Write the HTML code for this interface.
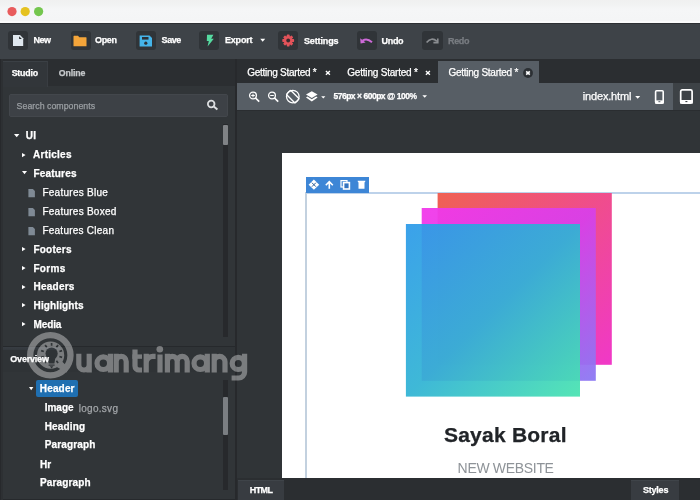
<!DOCTYPE html>
<html><head><meta charset="utf-8"><style>
html,body{margin:0;padding:0;}
body{width:700px;height:500px;position:relative;overflow:hidden;font-family:"Liberation Sans", sans-serif;background:#2f3336;}
.t{position:absolute;white-space:nowrap;-webkit-text-stroke:0.25px currentColor;filter:opacity(1);}
</style></head><body>
<div style="position:absolute;left:0px;top:0px;width:700px;height:23px;background:linear-gradient(#f0f0f0 0px,#f1f2f2 4px,#f5f6f7 9px,#f4f5f6 20px);"></div>
<div style="position:absolute;left:0px;top:20.6px;width:700px;height:2px;background:#fafbfb;"></div>
<svg style="position:absolute;left:0px;top:0px;" width="60" height="23" viewBox="0 0 60 23"><circle cx="12" cy="11.6" r="4.6" fill="#e85c5d"/><circle cx="25.2" cy="11.6" r="4.6" fill="#e5c220"/><circle cx="38.6" cy="11.6" r="4.6" fill="#74c64e"/></svg>
<div style="position:absolute;left:0px;top:23px;width:700px;height:36px;background:#3e4348;"></div>
<div style="position:absolute;left:0px;top:22.6px;width:700px;height:1.4px;background:#2d3034;"></div>
<div style="position:absolute;left:8.1px;top:31.4px;width:20.2px;height:18.6px;background:#303438;border-radius:3px;"></div>
<div style="position:absolute;left:70.5px;top:31.4px;width:20.2px;height:18.6px;background:#303438;border-radius:3px;"></div>
<div style="position:absolute;left:136.3px;top:31.4px;width:20.2px;height:18.6px;background:#303438;border-radius:3px;"></div>
<div style="position:absolute;left:199.2px;top:31.4px;width:20.2px;height:18.6px;background:#303438;border-radius:3px;"></div>
<div style="position:absolute;left:278px;top:31.4px;width:20.2px;height:18.6px;background:#303438;border-radius:3px;"></div>
<div style="position:absolute;left:356.9px;top:31.4px;width:20.2px;height:18.6px;background:#303438;border-radius:3px;"></div>
<div style="position:absolute;left:422.4px;top:31.4px;width:20.2px;height:18.6px;background:#303438;border-radius:3px;"></div>
<div class="t" style="left:33.4px;top:36.0px;font-size:9px;line-height:9px;font-weight:700;color:#fff;letter-spacing:-0.500px;">New</div>
<div class="t" style="left:95.0px;top:36.0px;font-size:9px;line-height:9px;font-weight:700;color:#fff;letter-spacing:-0.333px;">Open</div>
<div class="t" style="left:161.6px;top:36.0px;font-size:9px;line-height:9px;font-weight:700;color:#fff;letter-spacing:-0.433px;">Save</div>
<div class="t" style="left:225.0px;top:36.3px;font-size:9px;line-height:9px;font-weight:700;color:#fff;letter-spacing:-0.200px;">Export</div>
<div class="t" style="left:304.0px;top:37.0px;font-size:9px;line-height:9px;font-weight:700;color:#fff;letter-spacing:-0.143px;">Settings</div>
<div class="t" style="left:381.6px;top:37.0px;font-size:9px;line-height:9px;font-weight:700;color:#fff;letter-spacing:-0.333px;">Undo</div>
<div class="t" style="left:448.0px;top:37.0px;font-size:9px;line-height:9px;font-weight:700;color:#797d82;letter-spacing:-0.333px;">Redo</div>
<svg style="position:absolute;left:259px;top:38px;" width="8" height="5" viewBox="0 0 8 5"><path d="M1.2 0.8 H6.2 L3.7 3.8 Z" fill="#fff"/></svg>
<svg style="position:absolute;left:12px;top:34px;" width="12" height="13" viewBox="0 0 12 13"><path d="M1 1.1 H8 L11.2 4.3 V12.1 H1 Z" fill="#dfe7ee"/><path d="M7.1 2.2 L9.8 4.9 H7.1 Z" fill="#25282b"/></svg>
<svg style="position:absolute;left:73px;top:35px;" width="14" height="12" viewBox="0 0 14 12"><path d="M0.5 1.2 Q0.5 0.8 1 0.8 H5 L6.3 2.2 H13 Q13.5 2.2 13.5 2.7 V11.3 H0.5 Z" fill="#f4a53a"/></svg>
<svg style="position:absolute;left:139px;top:35px;" width="14" height="12" viewBox="0 0 14 12"><path d="M0.6 0.4 H10.5 L13 2.9 V11.5 H0.6 Z" fill="#45b4e9"/><rect x="3" y="2" width="6.5" height="2.6" fill="#2c3136"/><circle cx="6.8" cy="8.2" r="1.6" fill="#2c3136"/></svg>
<svg style="position:absolute;left:205px;top:34px;" width="10" height="13" viewBox="0 0 10 13"><path d="M2 0.8 H8.4 L6.2 4.8 H8.8 L2.6 12.4 L3.8 7 H1.8 Z" fill="#55daa0"/></svg>
<svg style="position:absolute;left:281px;top:34px;" width="14" height="14" viewBox="0 0 14 14"><g transform="translate(7.2 6.5)"><g fill="#e3535a"><rect x="-1.4" y="-5.9" width="2.8" height="3" rx="0.6" transform="rotate(0)"/><rect x="-1.4" y="-5.9" width="2.8" height="3" rx="0.6" transform="rotate(45)"/><rect x="-1.4" y="-5.9" width="2.8" height="3" rx="0.6" transform="rotate(90)"/><rect x="-1.4" y="-5.9" width="2.8" height="3" rx="0.6" transform="rotate(135)"/><rect x="-1.4" y="-5.9" width="2.8" height="3" rx="0.6" transform="rotate(180)"/><rect x="-1.4" y="-5.9" width="2.8" height="3" rx="0.6" transform="rotate(225)"/><rect x="-1.4" y="-5.9" width="2.8" height="3" rx="0.6" transform="rotate(270)"/><rect x="-1.4" y="-5.9" width="2.8" height="3" rx="0.6" transform="rotate(315)"/><circle r="4.4"/></g><circle r="1.9" fill="#3a2a2e"/></g></svg>
<svg style="position:absolute;left:359.4px;top:36.4px;" width="16" height="10" viewBox="0 0 16 10"><path d="M3.6 4.6 Q8 1.6 13 6.2" stroke="#cd6ad8" stroke-width="1.9" fill="none"/><path d="M1.2 2.2 L1.6 7.6 L6.6 6.4 Z" fill="#cd6ad8"/></svg>
<svg style="position:absolute;left:425px;top:37px;" width="15" height="8" viewBox="0 0 15 8"><path d="M1.6 5.6 Q6.4 -0.6 12 4.4" stroke="#8a8d91" stroke-width="1.6" fill="none"/><path d="M12.8 1.6 V5.6 H8.4" stroke="#8a8d91" stroke-width="1.6" fill="none"/></svg>
<div style="position:absolute;left:0px;top:59px;width:235px;height:441px;background:#313538;"></div>
<div style="position:absolute;left:0px;top:59px;width:235px;height:26.6px;background:#2b2e31;"></div>
<div style="position:absolute;left:1.2px;top:60.6px;width:46.8px;height:26px;background:#32363a;border-top:1px solid #3b4045;border-right:1px solid #393d42;border-left:1px solid #363a3e;box-sizing:border-box;"></div>
<div class="t" style="left:11.7px;top:69.1px;font-size:8.8px;line-height:8.8px;font-weight:700;color:#fff;letter-spacing:-0.200px;">Studio</div>
<div class="t" style="left:58.8px;top:69.1px;font-size:8.8px;line-height:8.8px;font-weight:700;color:#c6c9cc;letter-spacing:-0.160px;">Online</div>
<div style="position:absolute;left:8.6px;top:93.8px;width:219.4px;height:22.8px;background:#3d4146;border-radius:2px;border:1px solid #43474c;box-sizing:border-box;"></div>
<div class="t" style="left:16.6px;top:102.1px;font-size:8.8px;line-height:8.8px;font-weight:400;color:#9a9ea2;letter-spacing:0.013px;">Search components</div>
<svg style="position:absolute;left:205px;top:98px;" width="15" height="14" viewBox="0 0 15 14"><circle cx="6.2" cy="6" r="3.3" stroke="#dcdee0" stroke-width="1.8" fill="none"/><path d="M8.8 8.6 L12.4 11.6" stroke="#dcdee0" stroke-width="2"/></svg>
<div class="t" style="left:25.7px;top:130.9px;font-size:10px;line-height:10px;font-weight:700;color:#fff;letter-spacing:0.300px;">UI</div>
<svg style="position:absolute;left:13.3px;top:132.8px;" width="7.399999999999999" height="5.199999999999989" viewBox="0 0 7.399999999999999 5.199999999999989"><path d="M1 1 H6.399999999999999 L3.6999999999999993 4.199999999999989 Z" fill="#fff"/></svg>
<div class="t" style="left:33.1px;top:150.1px;font-size:10px;line-height:10px;font-weight:700;color:#fff;letter-spacing:0.243px;">Articles</div>
<svg style="position:absolute;left:20.8px;top:151.9px;" width="5.599999999999998" height="6.199999999999989" viewBox="0 0 5.599999999999998 6.199999999999989"><path d="M1 1 V5.199999999999989 L4.599999999999998 3.0999999999999943 Z" fill="#fff"/></svg>
<div class="t" style="left:33.4px;top:168.9px;font-size:10px;line-height:10px;font-weight:700;color:#fff;letter-spacing:0.200px;">Features</div>
<svg style="position:absolute;left:21.3px;top:170.3px;" width="7.0" height="5.199999999999989" viewBox="0 0 7.0 5.199999999999989"><path d="M1 1 H6.0 L3.5 4.199999999999989 Z" fill="#fff"/></svg>
<div class="t" style="left:42.4px;top:188.2px;font-size:10px;line-height:10px;font-weight:400;color:#fff;letter-spacing:0.267px;">Features Blue</div>
<svg style="position:absolute;left:28.3px;top:188.6px;" width="8" height="10" viewBox="0 0 8 10"><path d="M0.4 0 H4.9 L6.9 2 V8.3 H0.4 Z" fill="#7f8a95"/></svg>
<div class="t" style="left:42.4px;top:207.3px;font-size:10px;line-height:10px;font-weight:400;color:#fff;letter-spacing:0.254px;">Features Boxed</div>
<svg style="position:absolute;left:28.3px;top:207.7px;" width="8" height="10" viewBox="0 0 8 10"><path d="M0.4 0 H4.9 L6.9 2 V8.3 H0.4 Z" fill="#7f8a95"/></svg>
<div class="t" style="left:42.4px;top:226.2px;font-size:10px;line-height:10px;font-weight:400;color:#fff;letter-spacing:0.246px;">Features Clean</div>
<svg style="position:absolute;left:28.3px;top:226.6px;" width="8" height="10" viewBox="0 0 8 10"><path d="M0.4 0 H4.9 L6.9 2 V8.3 H0.4 Z" fill="#7f8a95"/></svg>
<div class="t" style="left:33.4px;top:244.6px;font-size:10px;line-height:10px;font-weight:700;color:#fff;letter-spacing:0.233px;">Footers</div>
<svg style="position:absolute;left:20.8px;top:246.4px;" width="5.599999999999998" height="6.199999999999989" viewBox="0 0 5.599999999999998 6.199999999999989"><path d="M1 1 V5.199999999999989 L4.599999999999998 3.0999999999999943 Z" fill="#fff"/></svg>
<div class="t" style="left:33.4px;top:263.5px;font-size:10px;line-height:10px;font-weight:700;color:#fff;letter-spacing:0.350px;">Forms</div>
<svg style="position:absolute;left:20.8px;top:265.3px;" width="5.599999999999998" height="6.199999999999989" viewBox="0 0 5.599999999999998 6.199999999999989"><path d="M1 1 V5.199999999999989 L4.599999999999998 3.0999999999999943 Z" fill="#fff"/></svg>
<div class="t" style="left:33.6px;top:282.1px;font-size:10px;line-height:10px;font-weight:700;color:#fff;letter-spacing:0.217px;">Headers</div>
<svg style="position:absolute;left:20.8px;top:283.9px;" width="5.599999999999998" height="6.199999999999989" viewBox="0 0 5.599999999999998 6.199999999999989"><path d="M1 1 V5.199999999999989 L4.599999999999998 3.0999999999999943 Z" fill="#fff"/></svg>
<div class="t" style="left:33.6px;top:300.6px;font-size:10px;line-height:10px;font-weight:700;color:#fff;letter-spacing:0.111px;">Highlights</div>
<svg style="position:absolute;left:20.8px;top:302.4px;" width="5.599999999999998" height="6.199999999999989" viewBox="0 0 5.599999999999998 6.199999999999989"><path d="M1 1 V5.199999999999989 L4.599999999999998 3.0999999999999943 Z" fill="#fff"/></svg>
<div class="t" style="left:33.6px;top:319.6px;font-size:10px;line-height:10px;font-weight:700;color:#fff;letter-spacing:-0.125px;">Media</div>
<svg style="position:absolute;left:20.8px;top:321.4px;" width="5.599999999999998" height="6.199999999999989" viewBox="0 0 5.599999999999998 6.199999999999989"><path d="M1 1 V5.199999999999989 L4.599999999999998 3.0999999999999943 Z" fill="#fff"/></svg>
<div style="position:absolute;left:223px;top:124px;width:5px;height:213px;background:#27292c;"></div>
<div style="position:absolute;left:223px;top:125px;width:5px;height:20px;background:#808386;border-radius:1px;"></div>
<div style="position:absolute;left:0px;top:346px;width:235px;height:1px;background:#26292c;"></div>
<div style="position:absolute;left:1px;top:347px;width:234px;height:25px;background:#2f3336;"></div>
<div style="position:absolute;left:1.6px;top:347px;width:58px;height:3px;background:linear-gradient(#383d43,#33383d);"></div>
<div class="t" style="left:10.3px;top:355.4px;font-size:9px;line-height:9px;font-weight:700;color:#fff;letter-spacing:-0.200px;">Overview</div>
<div style="position:absolute;left:36px;top:380.3px;width:42px;height:16.8px;background:#1f6fb1;border-radius:2px;"></div>
<div class="t" style="left:39.8px;top:384.0px;font-size:10px;line-height:10px;font-weight:700;color:#fff;letter-spacing:0.160px;">Header</div>
<svg style="position:absolute;left:27.8px;top:385.8px;" width="6.400000000000002" height="5.199999999999989" viewBox="0 0 6.400000000000002 5.199999999999989"><path d="M1 1 H5.400000000000002 L3.200000000000001 4.199999999999989 Z" fill="#fff"/></svg>
<div class="t" style="left:44.7px;top:402.7px;font-size:10px;line-height:10px;font-weight:700;color:#fff;letter-spacing:0.000px;">Image</div>
<div class="t" style="left:44.7px;top:421.7px;font-size:10px;line-height:10px;font-weight:700;color:#fff;letter-spacing:0.167px;">Heading</div>
<div class="t" style="left:44.7px;top:440.4px;font-size:10px;line-height:10px;font-weight:700;color:#fff;letter-spacing:0.162px;">Paragraph</div>
<div class="t" style="left:40.0px;top:459.8px;font-size:10px;line-height:10px;font-weight:700;color:#fff;letter-spacing:0.000px;">Hr</div>
<div class="t" style="left:40.0px;top:478.4px;font-size:10px;line-height:10px;font-weight:700;color:#fff;letter-spacing:0.150px;">Paragraph</div>
<div class="t" style="left:78.8px;top:403.6px;font-size:10px;line-height:10px;font-weight:400;color:#a2a5a8;letter-spacing:0.271px;">logo.svg</div>
<div style="position:absolute;left:223px;top:380px;width:5px;height:110px;background:#27292c;"></div>
<div style="position:absolute;left:223px;top:397.3px;width:5px;height:37.7px;background:#7a7e82;border-radius:1px;"></div>
<div style="position:absolute;left:0px;top:499px;width:235px;height:1px;background:#26292c;"></div>
<div style="position:absolute;left:0px;top:59px;width:3px;height:441px;background:#2d3033;"></div>
<div style="position:absolute;left:0px;top:59px;width:1px;height:441px;background:#27292c;"></div>
<div style="position:absolute;left:235px;top:59px;width:2px;height:441px;background:#27292c;"></div>
<div style="position:absolute;left:237px;top:59px;width:463px;height:24px;background:#2b2e31;"></div>
<div class="t" style="left:247.3px;top:68.2px;font-size:10px;line-height:10px;font-weight:400;color:#fff;letter-spacing:-0.281px;">Getting Started *</div>
<div class="t" style="left:347.3px;top:68.2px;font-size:10px;line-height:10px;font-weight:400;color:#fff;letter-spacing:-0.206px;">Getting Started *</div>
<div style="position:absolute;left:438px;top:61px;width:101px;height:22px;background:#575e65;"></div>
<div class="t" style="left:448.4px;top:68.2px;font-size:10px;line-height:10px;font-weight:400;color:#fff;letter-spacing:-0.250px;">Getting Started *</div>
<svg style="position:absolute;left:324.5px;top:70px;" width="6" height="6" viewBox="0 0 6 6"><path d="M0.9 1.1 L4.9 4.7 M4.9 1.1 L0.9 4.7" stroke="#fff" stroke-width="1.4"/></svg>
<svg style="position:absolute;left:424.5px;top:70px;" width="6" height="6" viewBox="0 0 6 6"><path d="M0.9 1.1 L4.9 4.7 M4.9 1.1 L0.9 4.7" stroke="#fff" stroke-width="1.4"/></svg>
<svg style="position:absolute;left:523px;top:67.6px;" width="10" height="10" viewBox="0 0 10 10"><circle cx="5" cy="5" r="4.9" fill="#2c3034"/><path d="M3.2 3.3 L6.8 6.7 M6.8 3.3 L3.2 6.7" stroke="#fff" stroke-width="1.6"/></svg>
<div style="position:absolute;left:237px;top:83px;width:436px;height:27px;background:#575e65;"></div>
<div style="position:absolute;left:673px;top:83px;width:27px;height:27px;background:#3d4246;"></div>
<svg style="position:absolute;left:247px;top:90px;" width="15" height="14" viewBox="0 0 15 14"><circle cx="6" cy="5.5" r="3.4" stroke="#fff" stroke-width="1.3" fill="none"/><path d="M8.5 8 L12.2 11.6" stroke="#fff" stroke-width="1.7"/><path d="M4.2 5.5 H7.8 M6 3.7 V7.3" stroke="#fff" stroke-width="1"/></svg>
<svg style="position:absolute;left:266px;top:90px;" width="15" height="14" viewBox="0 0 15 14"><circle cx="6" cy="5.5" r="3.4" stroke="#fff" stroke-width="1.3" fill="none"/><path d="M8.5 8 L12.2 11.6" stroke="#fff" stroke-width="1.7"/><path d="M4.2 5.5 H7.8" stroke="#fff" stroke-width="1"/></svg>
<svg style="position:absolute;left:284px;top:89px;" width="17" height="16" viewBox="0 0 17 16"><g transform="translate(8.8 7.6) rotate(-45)" stroke="#fff" stroke-width="1.3" fill="none"><circle r="6.3"/><rect x="-3" y="-6.1" width="6" height="12.2" rx="0.8"/></g></svg>
<svg style="position:absolute;left:304px;top:89px;" width="24" height="15" viewBox="0 0 24 15"><path d="M7.8 2.2 L13.6 5.6 L7.8 9 L2 5.6 Z" fill="#fff"/><path d="M3.4 7.6 L7.8 10.2 L12.2 7.6 L13.6 8.6 L7.8 12.4 L2 8.6 Z" fill="#fff"/><path d="M17.2 7.2 H21.4 L19.3 9.4 Z" fill="#fff"/></svg>
<div class="t" style="left:333.4px;top:92.0px;font-size:8.5px;line-height:8.5px;font-weight:700;color:#fff;letter-spacing:-0.474px;">576px × 600px @ 100%</div>
<svg style="position:absolute;left:421.8px;top:95.2px;" width="6" height="4" viewBox="0 0 6 4"><path d="M0.4 0.2 H5 L2.7 2.8 Z" fill="#fff"/></svg>
<div class="t" style="left:582.8px;top:90.5px;font-size:11px;line-height:11px;font-weight:400;color:#fff;letter-spacing:-0.178px;">index.html</div>
<svg style="position:absolute;left:634.5px;top:95.5px;" width="6" height="4" viewBox="0 0 6 4"><path d="M0.2 0 H5.2 L2.7 2.8 Z" fill="#fff"/></svg>
<svg style="position:absolute;left:654px;top:89px;" width="11" height="16" viewBox="0 0 11 16"><rect x="1.6" y="1.7" width="7.6" height="12.4" rx="1" stroke="#fff" stroke-width="1.6" fill="none"/><rect x="1" y="11.4" width="8.8" height="3.2" fill="#fff"/><rect x="4.4" y="12.2" width="2" height="1" fill="#575e65"/></svg>
<svg style="position:absolute;left:679px;top:88px;" width="15" height="17" viewBox="0 0 15 17"><rect x="1.7" y="1.8" width="11.4" height="13.4" rx="1.6" stroke="#fff" stroke-width="1.7" fill="none"/><rect x="1" y="12" width="12.8" height="3.6" fill="#fff"/><rect x="6.4" y="13" width="2" height="1.1" fill="#3d4246"/></svg>
<div style="position:absolute;left:237px;top:110px;width:463px;height:368px;background:#303437;"></div>
<div style="position:absolute;left:237px;top:110px;width:463px;height:1px;background:#2a2d30;"></div>
<div style="position:absolute;left:282px;top:152.6px;width:418px;height:325.4px;background:#ffffff;"></div>
<div style="position:absolute;left:305.8px;top:192px;width:394.2px;height:2px;background:#bdd2ea;"></div>
<div style="position:absolute;left:305px;top:192px;width:2px;height:286px;background:#c3d1df;"></div>
<div style="position:absolute;left:305.8px;top:177.1px;width:63px;height:15.5px;background:#3d86d6;"></div>
<svg style="position:absolute;left:305.8px;top:177.1px;" width="63" height="16" viewBox="0 0 63 16"><path d="M7.9 2.6 L13.2 7.7 L7.9 12.8 L2.6 7.7 Z" fill="#fff"/><path d="M5.9 5.7 L9.9 9.7 M9.9 5.7 L5.9 9.7" stroke="#2f6099" stroke-width="1.0"/><path d="M23.3 11.8 V4.8 M19.8 8.2 L23.3 4.6 L26.8 8.2" stroke="#fff" stroke-width="1.6" fill="none"/><rect x="35" y="3.6" width="6" height="6.4" stroke="#fff" stroke-width="1.2" fill="none"/><rect x="37.6" y="5.6" width="5.8" height="6.4" fill="#3474c0" stroke="#fff" stroke-width="1.6"/><path d="M51.7 3.8 H59.3 V4.6 L58.5 5.6 V11.4 Q58.5 11.8 58.1 11.8 H52.9 Q52.5 11.8 52.5 11.4 V5.6 L51.7 4.6 Z" fill="#fff"/></svg>
<svg style="position:absolute;left:0;top:0" width="700" height="500" viewBox="0 0 700 500">
<defs>
<linearGradient id="g1" x1="0" y1="0" x2="1" y2="1"><stop offset="0" stop-color="#ef6153"/><stop offset="1" stop-color="#f038c8"/></linearGradient>
<linearGradient id="g2" x1="0" y1="0" x2="1" y2="1"><stop offset="0" stop-color="#f238ea"/><stop offset="0.5" stop-color="#d840e8"/><stop offset="1" stop-color="#8a79f3"/></linearGradient>
<linearGradient id="g3" x1="0" y1="0" x2="1" y2="1"><stop offset="0" stop-color="#2c9ae9"/><stop offset="0.5" stop-color="#30b3d4"/><stop offset="1" stop-color="#48e3b0"/></linearGradient>
</defs>
<rect x="437.6" y="193" width="174.2" height="171.8" fill="url(#g1)"/>
<rect x="421.7" y="208" width="174.1" height="172.8" fill="url(#g2)" fill-opacity="0.95"/>
<rect x="405.9" y="224" width="174.1" height="172.6" fill="url(#g3)" fill-opacity="0.93"/>
</svg>
<div class="t" style="left:443.9px;top:424.1px;font-size:21px;line-height:21px;font-weight:700;color:#212428;letter-spacing:0.240px;">Sayak Boral</div>
<div class="t" style="left:457.6px;top:461.3px;font-size:14px;line-height:14px;font-weight:400;color:#8e9398;letter-spacing:-0.320px;-webkit-text-stroke:0;">NEW WEBSITE</div>
<div style="position:absolute;left:237px;top:478px;width:463px;height:22px;background:#2b2e31;"></div>
<div style="position:absolute;left:237.8px;top:480px;width:45.8px;height:20px;background:#383c41;border-top:1px solid #3f4449;box-sizing:border-box;"></div>
<div class="t" style="left:249.7px;top:485.8px;font-size:9px;line-height:9px;font-weight:700;color:#fff;letter-spacing:-0.533px;">HTML</div>
<div style="position:absolute;left:630.7px;top:480px;width:48.2px;height:20px;background:#383c41;border-top:1px solid #3f4449;box-sizing:border-box;"></div>
<div class="t" style="left:642.9px;top:486.4px;font-size:9px;line-height:9px;font-weight:700;color:#fff;letter-spacing:-0.200px;">Styles</div>
<svg style="position:absolute;left:0;top:0" width="700" height="500" viewBox="0 0 700 500">
<defs><mask id="wm" maskUnits="userSpaceOnUse" x="0" y="300" width="300" height="100">
<path fill="#fff" fill-rule="evenodd" d="M50.4 331.9 A23.3 23.3 0 1 1 50.3 378.5 A23.3 23.3 0 1 1 50.4 331.9 Z M50.4 338.2 A17 17 0 1 0 50.3 372.2 A17 17 0 1 0 50.4 338.2 Z"/>
<circle fill="#fff" cx="50.6" cy="355.2" r="13.6"/>
<path fill="#fff" d="M55 366 L66.5 372.5 L68.8 368 L61.5 361 Z"/>
<g stroke="#fff" stroke-width="5.2" fill="none">
<path d="M78.8 353.8 V364.8 A5.2 5.2 0 0 0 89.2 364.8 M89.2 353.8 V372.6 M110.4 353.8 V372.6 M116.2 372.6 V353.8 M116.2 361.4 A5 5 0 0 1 126.2 361.4 V372.6 M135 349.6 V366 A4 4 0 0 0 139 370 H142 M146.2 372.6 V353.8 M146.2 363 A6.4 6.4 0 0 1 152.6 356.4 H155.6 M160 354.4 V372.6 M167.4 372.6 V353.8 M167.4 361.3 A4.9 4.9 0 0 1 177.2 361.3 V372.6 M177.2 361.3 A5 5 0 0 1 187.2 361.3 V372.6 M207.3 353.8 V372.6 M214.2 372.6 V353.8 M214.2 361.8 A5.4 5.4 0 0 1 225 361.8 V372.6 M244.6 353.8 V372 A6 6 0 0 1 238.6 378 H231.6"/>
<path d="M132.4 356.6 H142" stroke-width="4.4"/>
<circle cx="103.3" cy="363.2" r="6.3"/><circle cx="200.3" cy="363.2" r="6.3"/><circle cx="238.3" cy="363.4" r="6.1"/>
</g>
<circle fill="#fff" cx="159.8" cy="349.2" r="3.3"/>
<g fill="#000">
<circle cx="51.6" cy="353.6" r="6.1"/>
<path d="M47.6 356 H55.6 L54.4 363.4 H48.8 Z"/>
<rect x="48.6" y="364.5" width="6" height="1.2"/>
<path d="M49.8 366.2 H53.4 L51.6 368.4 Z"/>
</g>
<g transform="translate(51.6 354)" stroke="#000" stroke-width="1.7"><path d="M0 -8.2 V-11" transform="rotate(-144)"/><path d="M0 -8.2 V-11" transform="rotate(-108)"/><path d="M0 -8.2 V-11" transform="rotate(-72)"/><path d="M0 -8.2 V-11" transform="rotate(-36)"/><path d="M0 -8.2 V-11" transform="rotate(0)"/><path d="M0 -8.2 V-11" transform="rotate(36)"/><path d="M0 -8.2 V-11" transform="rotate(72)"/><path d="M0 -8.2 V-11" transform="rotate(108)"/><path d="M0 -8.2 V-11" transform="rotate(144)"/></g>
</mask></defs>
<rect x="0" y="300" width="300" height="100" fill="#fff" fill-opacity="0.36" mask="url(#wm)"/>
</svg>
</body></html>
